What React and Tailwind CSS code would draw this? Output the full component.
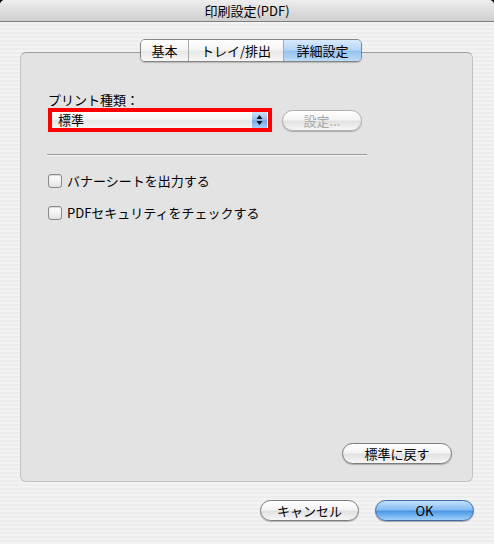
import React from 'react';

const jp = "font-['Noto_Sans_CJK_JP','Noto_Sans',sans-serif]";

const aquaBtn =
  'rounded-full border border-[#7c7c7c] bg-[linear-gradient(180deg,#ffffff_0%,#f4f4f4_45%,#e2e2e2_55%,#f6f6f6_100%)] shadow-[0_1px_1px_rgba(0,0,0,0.25)] flex items-center justify-center text-[13px] leading-none';

const Checkbox = ({ label }) => (
  <div className="flex items-center h-[16px]">
    <div className="w-[14px] h-[14px] rounded-[3px] border border-[#8a8a8a] bg-[linear-gradient(180deg,#ffffff_0%,#f0f0f0_60%,#e0e0e0_100%)] shadow-[inset_0_1px_1px_rgba(0,0,0,0.15)]" />
    <span className="ml-[5px] text-[13px] leading-[16px] text-black">{label}</span>
  </div>
);

const Tabs = () => {
  const tabs = [
    { name: '基本', w: 'w-[47px]' },
    { name: 'トレイ/排出', w: 'w-[95px]' },
    { name: '詳細設定', w: 'w-[78px]', active: true },
  ];
  return (
    <div className="relative z-10 ml-[140px] mt-[17px] flex h-[23px] w-fit rounded-[5px] border border-[#858585] overflow-hidden shadow-[0_1px_1px_rgba(0,0,0,0.2)]">
      {tabs.map((t, i) => (
        <div
          key={t.name}
          className={`${t.w} flex items-center justify-center text-[13px] leading-none text-black ${
            i > 0 ? 'border-l border-[#a8a8a8]' : ''
          } ${
            t.active
              ? 'bg-[linear-gradient(180deg,#d9eafc_0%,#b8d7f8_45%,#97c3f1_55%,#bcdcfb_100%)]'
              : 'bg-[linear-gradient(180deg,#ffffff_0%,#f5f5f5_45%,#e8e8e8_55%,#f7f7f7_100%)]'
          }`}
        >
          {t.name}
        </div>
      ))}
    </div>
  );
};

function App() {
  return (
    <div className={`w-[494px] h-[544px] bg-black ${jp}`}>
      <div className="w-full h-full rounded-t-[5px] overflow-hidden flex flex-col bg-[repeating-linear-gradient(180deg,#ededed_0px,#ededed_2px,#f3f3f3_2px,#f3f3f3_4px)]">
        {/* Title bar */}
        <div className="h-[22px] shrink-0 border-b border-[#7f7f7f] bg-[linear-gradient(180deg,#eeeeee_0%,#dedede_50%,#cfcfcf_100%)] flex items-center justify-center text-[13px] text-black leading-none">
          印刷設定(PDF)
        </div>

        <Tabs />

        {/* Group box */}
        <div className="-mt-[10px] ml-[20px] w-[453px] h-[430px] rounded-[6px] border border-[#c2c2c2] border-t-[#9c9c9c] bg-[#e3e3e3] flex flex-col pt-[39px] pl-[27px] pr-[20px] pb-[17px]">
          <div className="text-[13px] leading-[16px] text-black">プリント種類：</div>

          <div className="flex items-start">
            <div className="w-[224px] h-[24px] border-[4px] border-[#ff0000] flex">
              <div className="flex-1 flex bg-[linear-gradient(180deg,#ffffff_0%,#f6f6f6_45%,#e6e6e6_55%,#f4f4f4_100%)]">
                <span className="flex-1 pl-[6px] text-[13px] leading-[16px] text-black">標準</span>
                <div className="w-[15px] mr-[1px] flex items-center justify-center bg-[linear-gradient(180deg,#cfe3fb_0%,#8fbdf0_50%,#6ea9ea_55%,#a6cff8_100%)]">
                  <svg width="7" height="12" viewBox="0 0 7 12">
                    <path d="M3.5 1 L6.5 5 L0.5 5 Z" fill="#111" />
                    <path d="M3.5 11 L6.5 7 L0.5 7 Z" fill="#111" />
                  </svg>
                </div>
              </div>
            </div>
            <div className={`${aquaBtn} ml-[10px] mt-[2px] w-[80px] h-[21px] text-[#a8a8a8] border-[#b0b0b0]`}>
              設定...
            </div>
          </div>

          <div className="mt-[22px] -ml-px w-[320px] h-px bg-[#9a9a9a]" />
          <div className="-ml-px w-[320px] h-px bg-[#f4f4f4]" />

          <div className="mt-[17px]">
            <Checkbox label="バナーシートを出力する" />
          </div>
          <div className="mt-[16px]">
            <Checkbox label="PDFセキュリティをチェックする" />
          </div>

          <div className="mt-auto flex justify-end">
            <div className={`${aquaBtn} w-[110px] h-[21px] text-black`}>標準に戻す</div>
          </div>
        </div>

        {/* Bottom buttons */}
        <div className="mt-[18px] flex justify-end gap-[16px] pr-[20px]">
          <div className={`${aquaBtn} w-[99px] h-[21px] text-black`}>キャンセル</div>
          <div className="w-[99px] h-[21px] rounded-full border border-[#3e6aa6] bg-[linear-gradient(180deg,#c4e0fb_0%,#86bdf2_45%,#4d98e6_55%,#9fd2fb_100%)] shadow-[0_1px_1px_rgba(0,0,0,0.3)] flex items-center justify-center text-[13px] leading-none text-black">
            OK
          </div>
        </div>
      </div>
    </div>
  );
}

export default App;
